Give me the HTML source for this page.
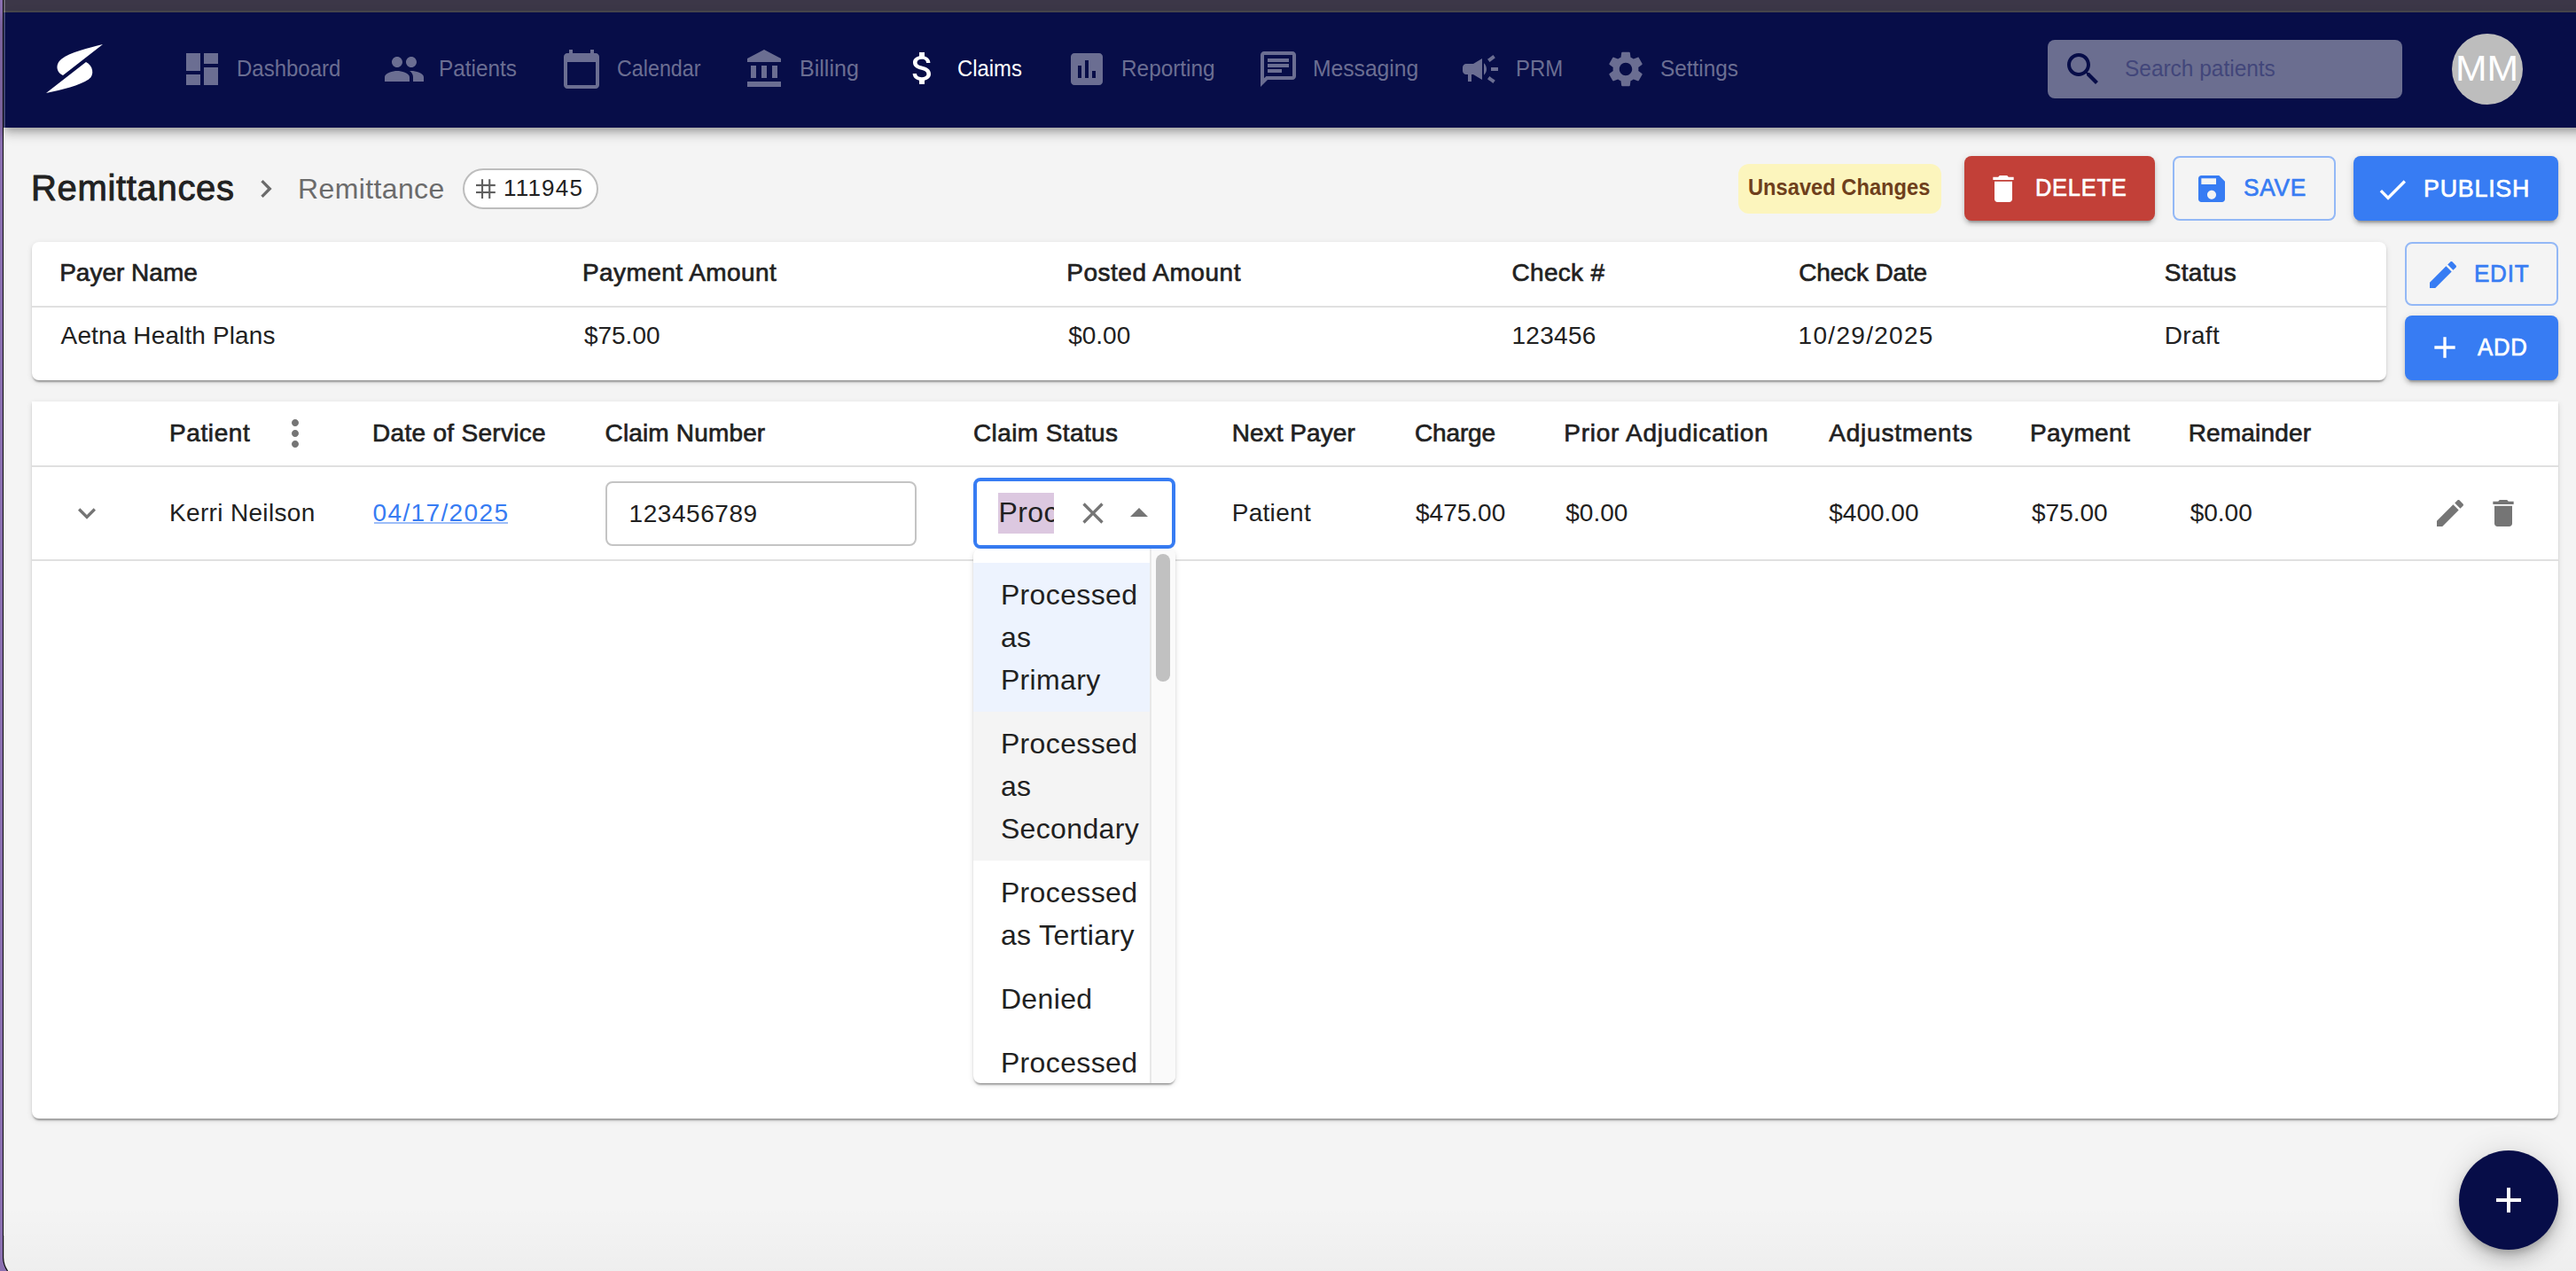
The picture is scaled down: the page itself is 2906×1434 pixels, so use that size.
<!DOCTYPE html>
<html><head><meta charset="utf-8">
<style>
html,body{margin:0;padding:0;}
body{width:2906px;height:1434px;overflow:hidden;position:relative;background:#f4f4f4;font-family:"Liberation Sans",sans-serif;color:#212121;}
.a{position:absolute;white-space:nowrap;line-height:1;}
.abs{position:absolute;}
svg{position:absolute;display:block;}
.nav{font-size:25px;color:#6b6e92;}
.hd{font-size:28px;color:#212121;-webkit-text-stroke:0.65px #212121;}
.td{font-size:28px;color:#212121;}
.card{position:absolute;background:#fff;border-radius:8px;box-shadow:0 4px 2px -2px rgba(0,0,0,0.2),0 2px 2px 0 rgba(0,0,0,0.14),0 2px 6px 0 rgba(0,0,0,0.12);}
.btn{position:absolute;border-radius:8px;box-sizing:border-box;}
.btxt{font-size:28px;-webkit-text-stroke:0.7px currentColor;}
</style></head>
<body>
<!-- window chrome -->
<div class="abs" style="left:0;top:0;width:3px;height:1434px;background:#8a6fb0"></div>
<div class="abs" style="left:3px;top:0;width:1px;height:1434px;background:#0a0a0a"></div>
<div class="abs" style="left:4px;top:0;width:2902px;height:12px;background:#3d3849"></div>
<div class="abs" style="left:4px;top:12px;width:2902px;height:2px;background:#4b4a50"></div>

<!-- navbar -->
<div class="abs" style="left:4px;top:14px;width:2950px;height:130px;background:#070d48;box-shadow:0 4px 8px -2px rgba(0,0,0,0.2),0 8px 10px 0 rgba(0,0,0,0.14),0 2px 20px 0 rgba(0,0,0,0.12)"></div>
<div class="abs" style="left:4px;top:0;width:2px;height:144px;background:rgba(255,255,255,0.22)"></div>
<svg style="left:0;top:0" width="140" height="140" viewBox="0 0 140 140">
<path fill="#fff" d="M116,50 C100,54 79,59 69.5,66.5 C61.5,73 64,82 71,85 Z"/>
<path fill="#fff" d="M52,105 L97,70 C105,74 107,84.5 100,89.5 C90,96.5 70,101 52,105 Z"/>
</svg>


<!-- nav icons -->
<svg style="left:204px;top:54px" width="48" height="48" viewBox="0 0 24 24"><path fill="#6b6e92" d="M3 13h8V3H3v10zm0 8h8v-6H3v6zm10 0h8V11h-8v10zm0-18v6h8V3h-8z"/></svg>
<div class="a nav" style="left:267px;top:64.8px;letter-spacing:0px;transform:scaleX(0.9589);transform-origin:0 0">Dashboard</div>
<svg style="left:432px;top:54px" width="48" height="48" viewBox="0 0 24 24"><path fill="#6b6e92" d="M16 11c1.66 0 2.99-1.34 2.99-3S17.66 5 16 5c-1.66 0-3 1.34-3 3s1.34 3 3 3zm-8 0c1.66 0 2.99-1.34 2.99-3S9.66 5 8 5C6.34 5 5 6.34 5 8s1.34 3 3 3zm0 2c-2.33 0-7 1.17-7 3.5V19h14v-2.5c0-2.33-4.67-3.5-7-3.5zm8 0c-.29 0-.62.02-.97.05 1.16.84 1.97 1.97 1.97 3.45V19h6v-2.5c0-2.33-4.67-3.5-7-3.5z"/></svg>
<div class="a nav" style="left:495px;top:64.8px;letter-spacing:0px;transform:scaleX(0.9734);transform-origin:0 0">Patients</div>
<svg style="left:632px;top:54px" width="48" height="48" viewBox="0 0 24 24"><path fill="#6b6e92" d="M20 3h-1V1h-2v2H7V1H5v2H4c-1.1 0-2 .9-2 2v16c0 1.1.9 2 2 2h16c1.1 0 2-.9 2-2V5c0-1.1-.9-2-2-2zm0 18H4V8h16v13z"/></svg>
<div class="a nav" style="left:696px;top:64.8px;letter-spacing:0px;transform:scaleX(0.9318);transform-origin:0 0">Calendar</div>
<svg style="left:839px;top:54px" width="48" height="48" viewBox="0 0 24 24"><path fill="#6b6e92" d="M4 10v7h3v-7H4zm6 0v7h3v-7h-3zM2 22h19v-3H2v3zm14-12v7h3v-7h-3zm-4.5-9L2 6v2h19V6l-9.5-5z"/></svg>
<div class="a nav" style="left:902px;top:64.8px;letter-spacing:0px;transform:scaleX(1.0026);transform-origin:0 0">Billing</div>
<svg style="left:1017px;top:53px" width="48" height="48" viewBox="0 0 24 24"><path fill="#ffffff" d="M11.8 10.9c-2.27-.59-3-1.2-3-2.15 0-1.09 1.01-1.85 2.7-1.85 1.78 0 2.44.85 2.5 2.1h2.21c-.07-1.72-1.12-3.3-3.21-3.81V3h-3v2.16c-1.94.42-3.5 1.68-3.5 3.61 0 2.31 1.91 3.46 4.7 4.13 2.5.6 3 1.48 3 2.41 0 .69-.49 1.79-2.7 1.79-2.06 0-2.87-.92-2.98-2.1h-2.2c.12 2.19 1.76 3.42 3.68 3.830V21h3v-2.15c1.950-.37 3.5-1.5 3.5-3.55 0-2.84-2.43-3.81-4.7-4.4z"/></svg>
<div class="a nav" style="left:1080px;top:64.8px;color:#fff;letter-spacing:0px;transform:scaleX(0.9547);transform-origin:0 0">Claims</div>
<svg style="left:1202px;top:54px" width="48" height="48" viewBox="0 0 24 24"><path fill="#6b6e92" d="M19 3H5c-1.1 0-2 .9-2 2v14c0 1.1.9 2 2 2h14c1.1 0 2-.9 2-2V5c0-1.1-.9-2-2-2zM9 17H7v-7h2v7zm4 0h-2V7h2v10zm4 0h-2v-4h2v4z"/></svg>
<div class="a nav" style="left:1265px;top:64.8px;letter-spacing:0px;transform:scaleX(0.9745);transform-origin:0 0">Reporting</div>
<svg style="left:1418px;top:54px" width="48" height="48" viewBox="0 0 24 24"><path fill="#6b6e92" d="M4 4h16v12H5.17L4 17.17V4m0-2c-1.1 0-1.99.9-1.99 2L2 22l4-4h14c1.1 0 2-.9 2-2V4c0-1.1-.9-2-2-2H4zm2 10h8v2H6v-2zm0-3h12v2H6V9zm0-3h12v2H6V6z"/></svg>
<div class="a nav" style="left:1481px;top:64.8px;letter-spacing:0px;transform:scaleX(0.9859);transform-origin:0 0">Messaging</div>
<svg style="left:1646px;top:54px" width="48" height="48" viewBox="0 0 24 24"><path fill="#6b6e92" d="M18 11v2h4v-2h-4zm-2 6.61c.96.71 2.21 1.65 3.2 2.39.4-.53.8-1.07 1.2-1.6-.99-.74-2.24-1.68-3.2-2.4-.4.54-.8 1.08-1.2 1.61zM20.4 5.6c-.4-.53-.8-1.07-1.2-1.6-.99.74-2.24 1.68-3.2 2.4.4.53.8 1.07 1.2 1.6.96-.72 2.21-1.65 3.2-2.4zM4 9c-1.1 0-2 .9-2 2v2c0 1.1.9 2 2 2h1v4h2v-4h1l5 3V6L8 9H4zm11.5 3c0-1.33-.58-2.530-1.5-3.35v6.69c.92-.81 1.5-2.01 1.5-3.34z"/></svg>
<div class="a nav" style="left:1710px;top:64.8px;letter-spacing:0px;transform:scaleX(0.9568);transform-origin:0 0">PRM</div>
<svg style="left:1810px;top:54px" width="48" height="48" viewBox="0 0 24 24"><path fill="#6b6e92" d="M19.14 12.94c.04-.3.06-.61.06-.94 0-.32-.02-.64-.07-.94l2.03-1.58c.18-.14.23-.41.12-.61l-1.92-3.32c-.12-.22-.37-.29-.59-.22l-2.39.96c-.5-.38-1.03-.7-1.62-.94l-.36-2.54c-.04-.24-.24-.41-.48-.41h-3.84c-.24 0-.43.17-.47.41l-.36 2.54c-.59.24-1.13.57-1.62.94l-2.39-.96c-.22-.08-.47 0-.59.22L2.74 8.87c-.12.21-.08.47.12.61l2.03 1.58c-.05.3-.09.63-.09.94s.02.64.07.94l-2.03 1.58c-.18.14-.23.41-.12.61l1.920 3.32c.12.22.37.29.59.22l2.39-.96c.5.38 1.03.7 1.62.94l.36 2.54c.05.24.24.41.48.41h3.84c.24 0 .44-.17.47-.41l.36-2.54c.59-.24 1.13-.56 1.62-.94l2.39.96c.22.08.47 0 .59-.22l1.92-3.32c.12-.22.07-.47-.12-.61l-2.01-1.58zM12 15.6c-1.98 0-3.6-1.62-3.6-3.6s1.62-3.6 3.6-3.6 3.6 1.62 3.6 3.6-1.62 3.6-3.6 3.6z"/></svg>
<div class="a nav" style="left:1873px;top:64.8px;letter-spacing:0px;transform:scaleX(0.9734);transform-origin:0 0">Settings</div>

<!-- search -->
<div class="abs" style="left:2310px;top:45px;width:400px;height:66px;border-radius:8px;background:#6b6e90"></div>
<svg style="left:2326px;top:54px" width="48" height="48" viewBox="0 0 24 24"><path fill="#070d48" d="M15.5 14h-.79l-.28-.27C15.41 12.59 16 11.11 16 9.5 16 5.91 13.09 3 9.5 3S3 5.91 3 9.5 5.91 16 9.5 16c1.61 0 3.09-.59 4.23-1.57l.27.28v.79l5 4.99L20.49 19l-4.99-5zm-6 0C7.01 14 5 11.99 5 9.5S7.01 5 9.5 5 14 7.01 14 9.5 11.99 14 9.5 14z"/></svg>
<div class="a nav" style="left:2397px;top:64.8px;color:#42467a;letter-spacing:0px;transform:scaleX(0.9776);transform-origin:0 0">Search patients</div>
<!-- avatar -->
<div class="abs" style="left:2766px;top:38px;width:80px;height:80px;border-radius:50%;background:#bdbdbd"></div>
<div class="a" style="left:2770px;top:57.3px;font-size:40px;color:#fff;transform:scaleX(1.067);transform-origin:0 0">MM</div>

<!-- breadcrumb -->
<div class="a" style="left:35px;top:192.1px;font-size:40px;letter-spacing:0.67px;-webkit-text-stroke:0.9px #212121">Remittances</div>
<svg style="left:280px;top:193.3px" width="40" height="40" viewBox="0 0 24 24"><path fill="#6b6b6b" d="M10 6L8.59 7.41 13.17 12l-4.58 4.59L10 18l6-6z"/></svg>
<div class="a" style="left:336px;top:196.9px;font-size:32px;letter-spacing:0.38px;color:#6b6b6b">Remittance</div>
<div class="abs" style="left:522px;top:190px;width:153px;height:46px;box-sizing:border-box;border:2px solid #bdbdbd;border-radius:23px;background:#fff"></div>
<svg style="left:530px;top:196px" width="36" height="36" viewBox="530 196 36 36"><g fill="#5f5f5f"><rect x="543" y="202.2" width="2.1" height="21.8"/><rect x="551.2" y="202.2" width="2.1" height="21.8"/><rect x="537" y="207.9" width="21.8" height="2.2"/><rect x="537" y="216" width="21.8" height="2.1"/></g></svg>
<div class="a" style="left:568px;top:198.9px;font-size:26px;letter-spacing:1.2px;color:#212121">111945</div>

<!-- unsaved chip -->
<div class="abs" style="left:1961px;top:185px;width:229px;height:56px;border-radius:12px;background:#fcf5bd"></div>
<div class="a" style="left:1972px;top:198.3px;font-size:26px;font-weight:bold;color:#6e3f1c;transform:scaleX(0.911);transform-origin:0 0">Unsaved Changes</div>

<!-- action buttons -->
<div class="btn" style="left:2216px;top:176px;width:215px;height:73px;background:#c24038;box-shadow:0 6px 2px -4px rgba(0,0,0,0.2),0 4px 4px 0 rgba(0,0,0,0.14),0 2px 10px 0 rgba(0,0,0,0.12)"></div>
<svg style="left:2239.6px;top:192.8px" width="40" height="40" viewBox="0 0 24 24"><path fill="#fff" d="M6 19c0 1.1.9 2 2 2h8c1.1 0 2-.9 2-2V7H6v12zM19 4h-3.5l-1-1h-5l-1 1H5v2h14V4z"/></svg>
<div class="a btxt" style="left:2295.5px;top:198.3px;color:#fff;letter-spacing:0.8px;transform:scaleX(0.909);transform-origin:0 0">DELETE</div>

<div class="btn" style="left:2451px;top:176px;width:184px;height:73px;border:2px solid #93b8f6"></div>
<svg style="left:2475px;top:192.8px" width="40" height="40" viewBox="0 0 24 24"><path fill="#377cf3" d="M17 3H5c-1.11 0-2 .9-2 2v14c0 1.1.89 2 2 2h14c1.1 0 2-.9 2-2V7l-4-4zm-5 16c-1.66 0-3-1.34-3-3s1.34-3 3-3 3 1.34 3 3-1.34 3-3 3zm3-10H5V5h10v4z"/></svg>
<div class="a btxt" style="left:2531px;top:198.3px;color:#377cf3;letter-spacing:0.8px;transform:scaleX(0.936);transform-origin:0 0">SAVE</div>

<div class="btn" style="left:2655px;top:176px;width:231px;height:73px;background:#377cf3;box-shadow:0 6px 2px -4px rgba(0,0,0,0.2),0 4px 4px 0 rgba(0,0,0,0.14),0 2px 10px 0 rgba(0,0,0,0.12)"></div>
<svg style="left:2679.3px;top:193.6px" width="40" height="40" viewBox="0 0 24 24"><path fill="#fff" d="M9 16.17L4.83 12l-1.42 1.41L9 19 21 7l-1.41-1.41z"/></svg>
<div class="a btxt" style="left:2734px;top:198.7px;color:#fff;letter-spacing:0.8px;transform:scaleX(0.958);transform-origin:0 0">PUBLISH</div>

<div class="btn" style="left:2712.5px;top:273px;width:173.5px;height:72px;border:2px solid #93b8f6"></div>
<svg style="left:2735.6px;top:289.9px" width="40" height="40" viewBox="0 0 24 24"><path fill="#377cf3" d="M3 17.25V21h3.75L17.81 9.94l-3.75-3.75L3 17.25zM20.71 7.04c.39-.39.39-1.02 0-1.41l-2.34-2.34c-.39-.39-1.02-.39-1.41 0l-1.83 1.83 3.75 3.75 1.83-1.83z"/></svg>
<div class="a btxt" style="left:2791px;top:295.4px;color:#377cf3;letter-spacing:0.8px;transform:scaleX(0.93);transform-origin:0 0">EDIT</div>

<div class="btn" style="left:2712.5px;top:356px;width:173.5px;height:73px;background:#377cf3;box-shadow:0 6px 2px -4px rgba(0,0,0,0.2),0 4px 4px 0 rgba(0,0,0,0.14),0 2px 10px 0 rgba(0,0,0,0.12)"></div>
<svg style="left:2738.3px;top:372px" width="40" height="40" viewBox="0 0 24 24"><path fill="#fff" d="M19 13h-6v6h-2v-6H5v-2h6V5h2v6h6v2z"/></svg>
<div class="a btxt" style="left:2794.8px;top:378.3px;color:#fff;letter-spacing:0.8px;transform:scaleX(0.918);transform-origin:0 0">ADD</div>

<!-- card 1 -->
<div class="card" style="left:36px;top:273px;width:2656px;height:156px"></div>
<div class="abs" style="left:36px;top:345px;width:2656px;height:2px;background:#e0e0e0"></div>
<div class="a hd" style="left:67.2px;top:294.4px;letter-spacing:0px">Payer Name</div>
<div class="a hd" style="left:656.9px;top:294.4px;letter-spacing:0.44px">Payment Amount</div>
<div class="a hd" style="left:1203.2px;top:294.4px;letter-spacing:0.53px">Posted Amount</div>
<div class="a hd" style="left:1705.5px;top:294.4px;letter-spacing:0.3px">Check #</div>
<div class="a hd" style="left:2029.2px;top:294.4px;letter-spacing:-0.15px">Check Date</div>
<div class="a hd" style="left:2441.8px;top:294.4px;letter-spacing:0.3px">Status</div>
<div class="a td" style="left:68.6px;top:365.3px;letter-spacing:0.13px">Aetna Health Plans</div>
<div class="a td" style="left:658.9px;top:365.3px">$75.00</div>
<div class="a td" style="left:1205.2px;top:365.3px">$0.00</div>
<div class="a td" style="left:1705.5px;top:365.3px;letter-spacing:0.3px">123456</div>
<div class="a td" style="left:2028.6px;top:365.3px;letter-spacing:1.3px">10/29/2025</div>
<div class="a td" style="left:2441.8px;top:365.3px;letter-spacing:0.3px">Draft</div>

<!-- card 2 -->
<div class="card" style="left:36px;top:453px;width:2850px;height:809px;border-radius:0 0 8px 8px"></div>
<div class="abs" style="left:36px;top:525px;width:2850px;height:2px;background:#e0e0e0"></div>
<div class="abs" style="left:36px;top:631px;width:2850px;height:2px;background:#e0e0e0"></div>
<div class="a hd" style="left:191px;top:474.7px;letter-spacing:0.6px">Patient</div>
<svg style="left:309px;top:465px" width="48" height="48" viewBox="0 0 24 24"><path fill="#757575" d="M12 8c1.1 0 2-.9 2-2s-.9-2-2-2-2 .9-2 2 .9 2 2 2zm0 2c-1.1 0-2 .9-2 2s.9 2 2 2 2-.9 2-2-.9-2-2-2zm0 6c-1.1 0-2 .9-2 2s.9 2 2 2 2-.9 2-2-.9-2-2-2z"/></svg>
<div class="a hd" style="left:420px;top:474.7px;letter-spacing:0.3px">Date of Service</div>
<div class="a hd" style="left:682.5px;top:474.7px;letter-spacing:0.16px">Claim Number</div>
<div class="a hd" style="left:1098px;top:474.7px;letter-spacing:0.39px">Claim Status</div>
<div class="a hd" style="left:1389.7px;top:474.7px;letter-spacing:0.06px">Next Payer</div>
<div class="a hd" style="left:1596px;top:474.7px;letter-spacing:-0.15px">Charge</div>
<div class="a hd" style="left:1764.3px;top:474.7px;letter-spacing:0.73px">Prior Adjudication</div>
<div class="a hd" style="left:2063.3px;top:474.7px;letter-spacing:0.76px">Adjustments</div>
<div class="a hd" style="left:2290px;top:474.7px;letter-spacing:0.38px">Payment</div>
<div class="a hd" style="left:2468.7px;top:474.7px;letter-spacing:0.18px">Remainder</div>

<svg style="left:78px;top:558.7px" width="40" height="40" viewBox="0 0 24 24"><path fill="#757575" d="M16.59 8.59L12 13.17 7.41 8.59 6 10l6 6 6-6z"/></svg>
<div class="a td" style="left:191px;top:565.3px;letter-spacing:0.33px">Kerri Neilson</div>
<div class="a td" style="left:420.6px;top:565.3px;letter-spacing:1.36px;color:#377cf3">04/17/2025</div>
<div class="abs" style="left:421.6px;top:589px;width:151px;height:2px;background:#9cbdf8"></div>
<div class="abs" style="left:682.6px;top:542.6px;width:351px;height:73px;box-sizing:border-box;border:2px solid #c4c4c4;border-radius:8px;background:#fff"></div>
<div class="a td" style="left:709.6px;top:565.6px;letter-spacing:0.54px">123456789</div>

<div class="abs" style="left:1098px;top:538.5px;width:228.3px;height:80px;box-sizing:border-box;border:4px solid #377cf3;border-radius:8px;background:#fff"></div>
<div class="abs" style="left:1126px;top:556px;width:63px;height:45.5px;background:#dcc8e0;overflow:hidden">
  <div class="a" style="left:0.6px;top:6.4px;font-size:32px;letter-spacing:0.36px">Proc</div>
</div>
<svg style="left:1212.7px;top:559.2px" width="40" height="40" viewBox="0 0 24 24"><path fill="#757575" d="M19 6.41L17.59 5 12 10.59 6.41 5 5 6.41 10.59 12 5 17.59 6.41 19 12 13.41 17.59 19 19 17.59 13.41 12z"/></svg>
<svg style="left:1261px;top:555px" width="48" height="48" viewBox="0 0 24 24"><path fill="#757575" d="M7 14l5-5 5 5z"/></svg>

<div class="a td" style="left:1389.7px;top:565.3px;letter-spacing:0.3px">Patient</div>
<div class="a td" style="left:1597px;top:565.3px">$475.00</div>
<div class="a td" style="left:1766.3px;top:565.3px">$0.00</div>
<div class="a td" style="left:2063.3px;top:565.3px">$400.00</div>
<div class="a td" style="left:2292px;top:565.3px">$75.00</div>
<div class="a td" style="left:2470.7px;top:565.3px">$0.00</div>
<svg style="left:2743.7px;top:558.5px" width="40" height="40" viewBox="0 0 24 24"><path fill="#757575" d="M3 17.25V21h3.75L17.81 9.94l-3.75-3.75L3 17.25zM20.71 7.04c.39-.39.39-1.02 0-1.41l-2.34-2.34c-.39-.39-1.02-.39-1.41 0l-1.83 1.83 3.75 3.75 1.830-1.83z"/></svg>
<svg style="left:2803.7px;top:558.5px" width="40" height="40" viewBox="0 0 24 24"><path fill="#757575" d="M6 19c0 1.1.9 2 2 2h8c1.1 0 2-.9 2-2V7H6v12zM19 4h-3.5l-1-1h-5l-1 1H5v2h14V4z"/></svg>

<!-- dropdown -->
<div class="abs" style="left:1098px;top:619px;width:228px;height:603px;background:#fff;border-radius:8px;overflow:hidden;box-shadow:0 4px 2px -2px rgba(0,0,0,0.2),0 2px 2px 0 rgba(0,0,0,0.14),0 2px 6px 0 rgba(0,0,0,0.12)">
  <div class="abs" style="left:0;top:16px;width:199px;height:168px;background:#edf3fe"></div>
  <div class="abs" style="left:0;top:184px;width:199px;height:168px;background:#f4f4f4"></div>
  <div class="abs" style="left:30.9px;top:28px;font-size:32px;line-height:48px;letter-spacing:0.36px;white-space:nowrap">Processed<br>as<br>Primary</div>
  <div class="abs" style="left:30.9px;top:196px;font-size:32px;line-height:48px;letter-spacing:0.36px;white-space:nowrap">Processed<br>as<br>Secondary</div>
  <div class="abs" style="left:30.9px;top:364px;font-size:32px;line-height:48px;letter-spacing:0.36px;white-space:nowrap">Processed<br>as Tertiary</div>
  <div class="abs" style="left:30.9px;top:484px;font-size:32px;line-height:48px;letter-spacing:0.36px;white-space:nowrap">Denied</div>
  <div class="abs" style="left:30.9px;top:556px;font-size:32px;line-height:48px;letter-spacing:0.36px;white-space:nowrap">Processed</div>
  <div class="abs" style="left:198.6px;top:0;width:29.4px;height:603px;background:#fafafa;border-left:2px solid #e8e8e8;box-sizing:border-box"></div>
  <div class="abs" style="left:206px;top:6px;width:16px;height:144px;border-radius:8px;background:#c1c1c1"></div>
</div>

<div class="abs" style="left:4px;top:1360px;width:2902px;height:74px;background:linear-gradient(rgba(0,0,0,0),rgba(0,0,0,0.025))"></div>
<!-- FAB -->
<div class="abs" style="left:2774px;top:1298px;width:112px;height:112px;border-radius:50%;background:#070d48;box-shadow:0 6px 10px -2px rgba(0,0,0,0.2),0 12px 20px 0 rgba(0,0,0,0.14),0 2px 36px 0 rgba(0,0,0,0.12)"></div>
<svg style="left:2805.8px;top:1329.7px" width="48" height="48" viewBox="0 0 24 24"><path fill="#fff" d="M19 13h-6v6h-2v-6H5v-2h6V5h2v6h6v2z"/></svg>

<svg style="left:0;top:1394px" width="40" height="40" viewBox="0 0 40 40">
<path fill="#8a6fb0" d="M0,0 H3.5 V25 A27,27 0 0 0 8.5,40 H0 Z"/>
<path fill="none" stroke="#0a0a0a" stroke-width="1.2" d="M3.6,0 V25 A27,27 0 0 0 8.6,40"/>
</svg>

</body></html>
